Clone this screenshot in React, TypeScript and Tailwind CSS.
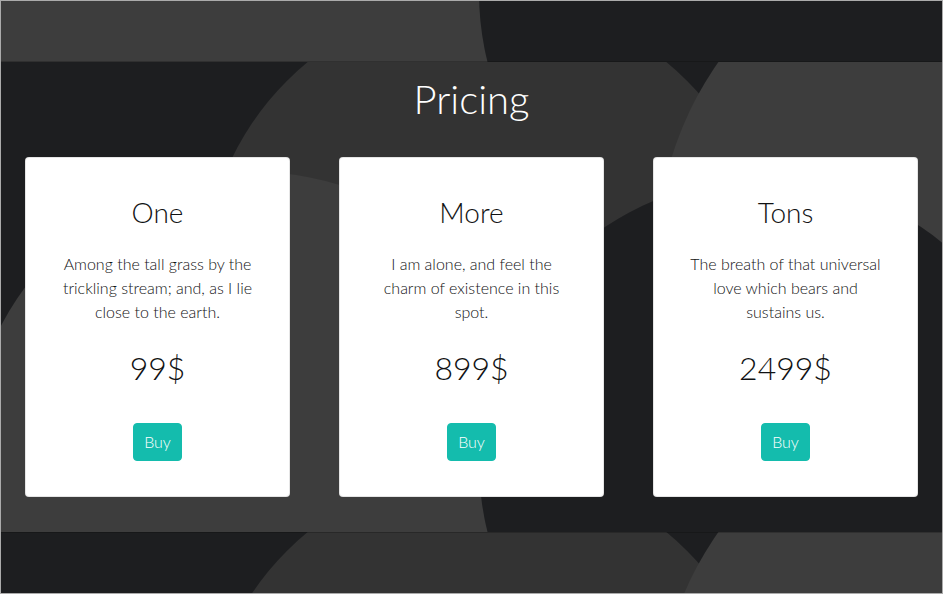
const plans = [
  {
    name: "One",
    text: "Among the tall grass by the trickling stream; and, as I lie close to the earth.",
    price: "99$",
  },
  {
    name: "More",
    text: "I am alone, and feel the charm of existence in this spot.",
    price: "899$",
  },
  {
    name: "Tons",
    text: "The breath of that universal love which bears and sustains us.",
    price: "2499$",
  },
];

// Decorative circle tile behind the whole page (repeats every 470px)
function Bubbles() {
  return (
    <svg className="absolute inset-0 h-full w-full" aria-hidden="true">
      <defs>
        <pattern id="bubbles" x="0" y="61" width="1400" height="470" patternUnits="userSpaceOnUse">
          <rect width="1400" height="470" fill="#1d1e20" />
          <circle cx="486" cy="219" r="283" fill="#333333" />
          <circle cx="1000" cy="198" r="345" fill="#3d3d3d" />
          <circle cx="253" cy="395" r="285" fill="#3d3d3d" />
          <circle cx="762" cy="401" r="284" fill="#1d1e20" />
        </pattern>
      </defs>
      <rect width="100%" height="100%" fill="url(#bubbles)" />
    </svg>
  );
}

export default function App() {
  return (
    <div className="relative h-[594px] w-full overflow-hidden border border-[#ababab] bg-[#1d1e20] font-['Lato',sans-serif]">
      <Bubbles />

      <header className="relative h-[61px] border-b border-black/20" />

      <main className="relative flex h-[470px] flex-col items-center">
        <h1 className="mt-[13px] text-[40px] leading-[48px] font-light text-white">Pricing</h1>

        <div className="mt-[34px] grid w-full grid-cols-3 gap-[49px] px-6">
          {plans.map((plan) => (
            <div
              key={plan.name}
              className="flex h-[340px] flex-col items-center rounded border border-black/10 bg-white px-9 pt-[37px] text-center text-[#111213]"
            >
              <h3 className="text-[28px] leading-[34px] font-light">{plan.name}</h3>
              <p className="mt-[23px] text-base leading-6 font-light">{plan.text}</p>
              <div className="mt-[25px] text-[32px] leading-[38px] font-light">{plan.price}</div>
              <button className="mt-[36px] rounded border border-[#14bcad] bg-[#14bcad] px-2.5 py-1.5 text-base leading-6 font-light text-white">
                Buy
              </button>
            </div>
          ))}
        </div>
      </main>

      <footer className="relative h-[61px] border-t border-black/20" />
    </div>
  );
}
